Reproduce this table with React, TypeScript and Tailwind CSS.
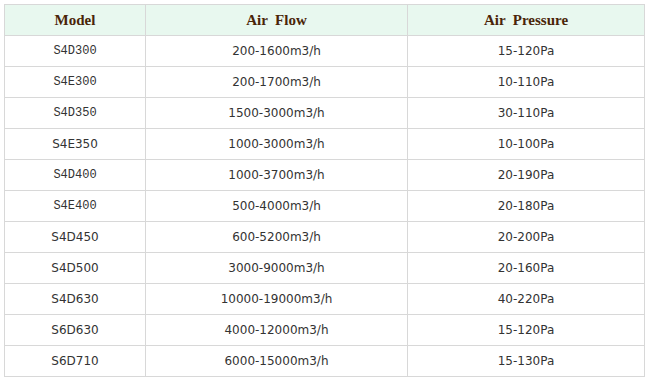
const rows: { model: string; mono: boolean; flow: string; pressure: string }[] = [
  { model: "S4D300", mono: true, flow: "200-1600m3/h", pressure: "15-120Pa" },
  { model: "S4E300", mono: true, flow: "200-1700m3/h", pressure: "10-110Pa" },
  { model: "S4D350", mono: true, flow: "1500-3000m3/h", pressure: "30-110Pa" },
  { model: "S4E350", mono: false, flow: "1000-3000m3/h", pressure: "10-100Pa" },
  { model: "S4D400", mono: true, flow: "1000-3700m3/h", pressure: "20-190Pa" },
  { model: "S4E400", mono: true, flow: "500-4000m3/h", pressure: "20-180Pa" },
  { model: "S4D450", mono: false, flow: "600-5200m3/h", pressure: "20-200Pa" },
  { model: "S4D500", mono: false, flow: "3000-9000m3/h", pressure: "20-160Pa" },
  { model: "S4D630", mono: false, flow: "10000-19000m3/h", pressure: "40-220Pa" },
  { model: "S6D630", mono: false, flow: "4000-12000m3/h", pressure: "15-120Pa" },
  { model: "S6D710", mono: false, flow: "6000-15000m3/h", pressure: "15-130Pa" },
];

export default function App() {
  return (
    <div className="w-[650px] h-[381px] bg-white pt-[4px] pl-[4px]">
      <table className="border-collapse table-fixed w-[640px] font-['DejaVu_Sans',sans-serif] text-[12px] text-[#333]">
        <colgroup>
          <col className="w-[141px]" />
          <col className="w-[262px]" />
          <col className="w-[237px]" />
        </colgroup>
        <thead>
          <tr className="h-[31px] bg-[#e8f8ef]">
            {["Model", "Air  Flow", "Air  Pressure"].map((h) => (
              <th
                key={h}
                className="border border-[#d8d8d8] text-center whitespace-pre font-['Liberation_Serif',serif] font-bold text-[15px] text-[#4a2508] p-0"
              >
                {h}
              </th>
            ))}
          </tr>
        </thead>
        <tbody>
          {rows.map((r) => (
            <tr key={r.model} className="h-[31px]">
              <td
                className={
                  r.mono
                    ? "border border-[#d8d8d8] text-center p-0 font-['Liberation_Mono',monospace] text-[12px]"
                    : "border border-[#d8d8d8] text-center p-0"
                }
              >
                {r.model}
              </td>
              <td className="border border-[#d8d8d8] text-center p-0">{r.flow}</td>
              <td className="border border-[#d8d8d8] text-center p-0">{r.pressure}</td>
            </tr>
          ))}
        </tbody>
      </table>
    </div>
  );
}
